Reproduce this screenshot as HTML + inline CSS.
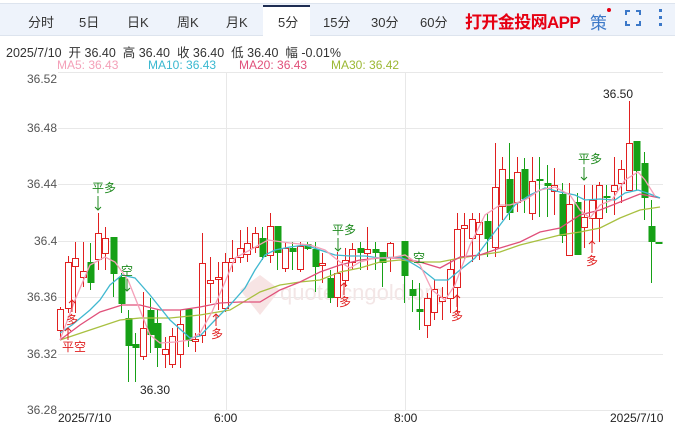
<!DOCTYPE html>
<html><head><meta charset="utf-8"><style>
body{margin:0;width:675px;height:424px;background:#fff;overflow:hidden;font-family:"Liberation Sans","Noto Sans CJK SC",sans-serif;position:relative}
.bar{position:absolute;left:0;top:3px;width:675px;height:31px;background:#eef3fb;border-top:1px solid #dde4ee;border-bottom:1px solid #dde4ee}
.t{position:absolute;top:12px;font-size:13px;color:#333}
.act{position:absolute;left:263px;top:5px;width:47px;height:31px;background:#fff;border-top:2px solid #1e2d52}
.ad{position:absolute;left:465px;top:8px;font-size:17px;font-weight:bold;color:#e60012;letter-spacing:-0.6px}
.info{position:absolute;left:6px;top:42px;font-size:12.5px;color:#333}
.ma{position:absolute;top:58px;font-size:12px}
svg{position:absolute;left:0;top:0}
</style></head><body>
<div class="bar"></div>
<div class="act"></div>
<span class="t" style="left:28px">分时</span>
<span class="t" style="left:79px">5日</span>
<span class="t" style="left:127px">日K</span>
<span class="t" style="left:177px">周K</span>
<span class="t" style="left:226px">月K</span>
<span class="t" style="left:278px">5分</span>
<span class="t" style="left:323px">15分</span>
<span class="t" style="left:371px">30分</span>
<span class="t" style="left:420px">60分</span>
<span class="ad">打开金投网APP</span>
<span style="position:absolute;left:590px;top:9px;font-size:17px;color:#3b78c8">策</span>
<span style="position:absolute;left:607px;top:8px;width:4px;height:4px;border-radius:2px;background:#e60012"></span>
<svg width="675" height="40" style="position:absolute;left:0;top:0">
<path d="M626 15v-4h4M636 11h4v4M640 21v4h-4M630 25h-4v-4" stroke="#3b78c8" stroke-width="2" fill="none"/>
<rect x="659" y="9" width="3" height="3" fill="#3b78c8"/><rect x="659" y="16" width="3" height="3" fill="#3b78c8"/><rect x="659" y="23" width="3" height="3" fill="#3b78c8"/>
</svg>
<div class="info">2025/7/10&nbsp; 开 36.40&nbsp; 高 36.40&nbsp; 收 36.40&nbsp; 低 36.40&nbsp; 幅 -0.01%</div>
<span class="ma" style="left:57px;color:#f4a0b8">MA5: 36.43</span>
<span class="ma" style="left:148px;color:#3ab8d0">MA10: 36.43</span>
<span class="ma" style="left:239px;color:#e0507a">MA20: 36.43</span>
<span class="ma" style="left:331px;color:#9cb834">MA30: 36.42</span>
<svg id="s" width="675" height="424" font-family="Liberation Sans, Noto Sans CJK SC, sans-serif">
<g stroke="#e8e8e8" stroke-width="1">
<line x1="58" y1="72.5" x2="663" y2="72.5"/><line x1="58" y1="128.5" x2="663" y2="128.5"/><line x1="58" y1="184.5" x2="663" y2="184.5"/><line x1="58" y1="241.5" x2="663" y2="241.5"/><line x1="58" y1="297.5" x2="663" y2="297.5"/><line x1="58" y1="354.5" x2="663" y2="354.5"/><line x1="58" y1="410.5" x2="663" y2="410.5"/>
<line x1="226.5" y1="72" x2="226.5" y2="410"/><line x1="405.5" y1="72" x2="405.5" y2="410"/>
</g>
<g fill="#555" font-size="12">
<text x="27" y="83">36.52</text><text x="27" y="132">36.48</text><text x="27" y="188">36.44</text><text x="34" y="245">36.4</text><text x="27" y="301">36.36</text><text x="27" y="358">36.32</text><text x="27" y="414">36.28</text>
</g>
<g fill="#222" font-size="12">
<text x="58" y="422">2025/7/10</text><text x="214" y="422">6:00</text><text x="394" y="422">8:00</text><text x="610" y="422">2025/7/10</text>
<text x="140" y="394">36.30</text><text x="603" y="98">36.50</text>
</g>
<text x="280" y="300" fill="#f3e6e6" font-size="22">quote.cngold.org</text>
<path d="M240 290 l20 -15 l20 15 l-20 25z" fill="#f7e4e4"/>
<g id="c"></g>
<g id="m" fill="none" stroke-width="1.3"></g>
<g font-size="12">
<g fill="#1f8a1f"><text x="92" y="192">平多</text><text x="332" y="234">平多</text><text x="578" y="163">平多</text><text x="121" y="275">空</text><text x="413" y="262">空</text></g>
<g fill="#e02020"><text x="62" y="351">平空</text><text x="66" y="324">多</text><text x="211" y="338">多</text><text x="339" y="306">多</text><text x="451" y="320">多</text><text x="586" y="265">多</text></g>
<g stroke="#1f8a1f" fill="none"><path d="M98 196v14m-3-3l3 3 3-3"/><path d="M338 238v13m-3-3l3 3 3-3"/><path d="M584 167v13m-3-3l3 3 3-3"/><path d="M127 279v12m-3-3l3 3 3-3"/></g>
<g stroke="#e02020" fill="none"><path d="M68 340v-12m-3 3l3-3 3 3"/><path d="M72 312v-12m-3 3l3-3 3 3"/><path d="M216 326v-12m-3 3l3-3 3 3"/><path d="M344 295v-12m-3 3l3-3 3 3"/><path d="M457 307v-12m-3 3l3-3 3 3"/><path d="M592 253v-12m-3 3l3-3 3 3"/></g>
</g>
</svg>
<script>
var C=[[60,'r',309,330,307,340],[68,'r',262,308,256,313],[75,'r',258,266,242,313],[83,'r',271,277,242,287],[90,'g',262,283,243,290],[98,'r',233,259,213,270],[105,'r',238,253,227,270],[113,'g',237,274,237,297],[121,'g',277,304,273,313],[128,'g',318,346,310,382],[135,'g',344,348,333,382],[143,'r',328,356,292,360],[150,'g',310,335,298,353],[157,'g',323,348,310,367],[165,'r',349,354,337,368],[172,'r',336,364,328,368],[180,'r',324,354,310,368],[188,'g',309,341,310,347],[195,'r',339,341,333,352],[202,'r',263,335,233,343],[210,'r',280,283,257,303],[218,'r',277,279,262,310],[225,'r',262,308,253,312],[232,'r',258,262,240,272],[240,'r',248,257,230,263],[247,'r',243,254,227,262],[255,'r',233,247,227,253],[262,'g',238,257,227,260],[270,'r',226,255,213,263],[277,'g',226,253,227,270],[285,'r',248,268,242,272],[292,'g',248,252,242,270],[300,'r',246,269,242,272],[307,'g',244,249,242,250],[315,'g',249,267,242,292],[322,'r',263,265,253,283],[330,'g',278,298,270,303],[337,'r',273,297,252,307],[345,'r',260,280,248,287],[352,'r',249,262,243,270],[360,'g',248,253,242,270],[367,'r',249,253,227,270],[375,'g',249,253,242,270],[382,'g',252,263,252,287],[390,'r',243,257,242,272],[404,'g',241,276,241,303],[412,'g',289,296,280,312],[419,'g',309,312,283,330],[427,'r',298,325,293,338],[434,'r',289,312,280,320],[442,'r',297,301,287,320],[450,'r',269,298,260,313],[457,'r',229,287,213,313],[464,'r',225,228,213,260],[472,'r',219,238,213,262],[479,'r',222,234,213,260],[487,'g',221,239,213,257],[495,'r',187,247,143,257],[502,'r',169,206,157,220],[509,'g',179,213,143,220],[517,'r',172,202,157,212],[524,'g',169,199,158,213],[532,'r',181,213,157,220],[539,'g',179,181,157,217],[547,'g',183,186,165,217],[554,'r',185,191,168,215],[562,'g',194,236,183,243],[569,'r',204,255,183,255],[577,'g',202,255,193,255],[584,'r',217,227,185,248],[592,'r',200,218,185,242],[599,'r',185,218,182,242],[606,'g',196,198,185,213],[614,'r',185,191,157,215],[621,'r',169,183,160,203],[629,'r',143,190,101,190],[636,'g',141,171,141,190],[644,'g',163,198,152,220],[651,'g',226,242,200,283],[658,'g',242,244,242,244]];
var h='';C.forEach(function(c){var col=c[1]=='r'?'#e02020':'#16a016';var x=c[0];
h+='<line x1="'+x+'.5" y1="'+c[4]+'" x2="'+x+'.5" y2="'+c[5]+'" stroke="'+col+'"/>';
var hgt=Math.max(c[3]-c[2],2);
if(c[1]=='r')h+='<rect x="'+(x-2.5)+'" y="'+c[2]+'.5" width="6" height="'+hgt+'" fill="#fff" stroke="'+col+'"/>';
else h+='<rect x="'+(x-2.5)+'" y="'+c[2]+'" width="7" height="'+hgt+'" fill="'+col+'"/>';});
document.getElementById('c').innerHTML=h;
function pl(a,col){var s='';for(var i=0;i<a.length;i+=2)s+=a[i]+','+a[i+1]+' ';return '<polyline points="'+s+'" stroke="'+col+'"/>';}
var m='';
m+=pl([60,340,90,330,120,320,140,318,170,318,200,315,230,310,260,292,280,285,300,282,320,280,340,272,360,268,380,262,400,260,420,262,440,262,460,258,480,255,500,252,520,245,540,240,560,235,580,232,600,228,620,218,640,210,660,207],'#a8c040');
m+=pl([60,340,80,325,100,312,122,305,140,305,160,310,180,310,200,307,220,303,240,302,260,302,280,290,300,282,320,272,340,265,360,260,380,258,400,258,420,262,440,268,460,257,480,255,500,248,520,242,540,232,560,228,580,215,600,210,620,202,640,194,660,198],'#e0507a');
m+=pl([60,333,72,325,90,310,100,300,110,285,122,275,135,278,150,295,170,320,190,338,200,336,215,320,230,305,245,288,255,270,265,255,275,250,290,247,305,245,320,250,335,255,350,256,365,256,380,258,400,257,410,262,420,268,435,280,448,280,460,270,475,258,490,238,500,225,515,205,530,195,545,188,560,192,575,195,585,200,600,199,615,200,625,193,638,190,650,194,660,198],'#40b8d0');
m+=pl([60,340,75,300,90,265,105,257,115,262,128,280,140,310,150,335,160,343,175,342,190,340,200,333,212,312,225,282,235,258,250,250,268,240,290,243,310,245,325,250,340,262,350,268,360,262,375,258,390,258,405,255,420,265,432,290,445,300,455,285,470,245,485,215,500,205,510,205,525,200,540,190,555,187,570,195,580,210,590,218,600,205,612,200,625,180,638,172,645,180,655,196],'#f4a0b8');
document.getElementById('m').innerHTML=m;
</script>
</body></html>
